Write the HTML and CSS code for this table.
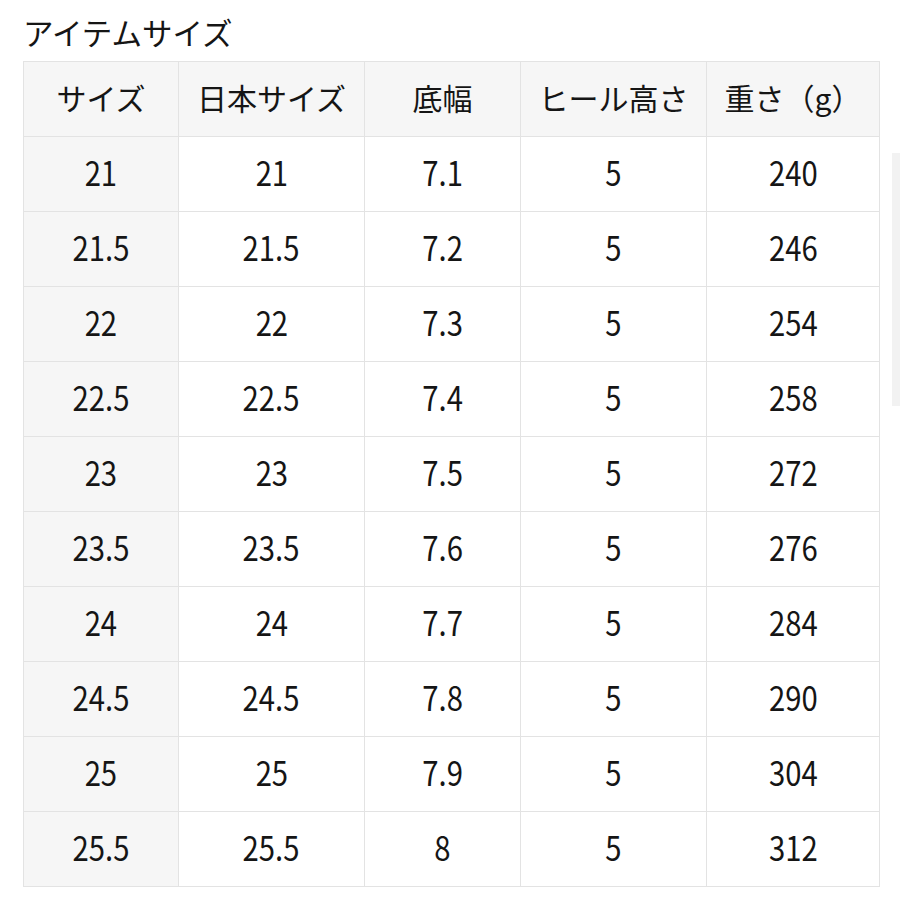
FILE: index.html
```html
<!DOCTYPE html>
<html lang="ja">
<head>
<meta charset="utf-8">
<link rel="stylesheet" href="styles.css">
</head>
<body>
<div class="page">
  <h2 class="title">アイテムサイズ</h2>
  <table class="sizes">
    <colgroup>
      <col class="c1"><col class="c2"><col class="c3"><col class="c4"><col class="c5">
    </colgroup>
    <thead>
      <tr><th>サイズ</th><th>日本サイズ</th><th>底幅</th><th>ヒール高さ</th><th>重さ（g）</th></tr>
    </thead>
    <tbody>
      <tr><th><span class="num">21</span></th><td><span class="num">21</span></td><td><span class="num">7.1</span></td><td><span class="num">5</span></td><td><span class="num">240</span></td></tr>
      <tr><th><span class="num">21.5</span></th><td><span class="num">21.5</span></td><td><span class="num">7.2</span></td><td><span class="num">5</span></td><td><span class="num">246</span></td></tr>
      <tr><th><span class="num">22</span></th><td><span class="num">22</span></td><td><span class="num">7.3</span></td><td><span class="num">5</span></td><td><span class="num">254</span></td></tr>
      <tr><th><span class="num">22.5</span></th><td><span class="num">22.5</span></td><td><span class="num">7.4</span></td><td><span class="num">5</span></td><td><span class="num">258</span></td></tr>
      <tr><th><span class="num">23</span></th><td><span class="num">23</span></td><td><span class="num">7.5</span></td><td><span class="num">5</span></td><td><span class="num">272</span></td></tr>
      <tr><th><span class="num">23.5</span></th><td><span class="num">23.5</span></td><td><span class="num">7.6</span></td><td><span class="num">5</span></td><td><span class="num">276</span></td></tr>
      <tr><th><span class="num">24</span></th><td><span class="num">24</span></td><td><span class="num">7.7</span></td><td><span class="num">5</span></td><td><span class="num">284</span></td></tr>
      <tr><th><span class="num">24.5</span></th><td><span class="num">24.5</span></td><td><span class="num">7.8</span></td><td><span class="num">5</span></td><td><span class="num">290</span></td></tr>
      <tr><th><span class="num">25</span></th><td><span class="num">25</span></td><td><span class="num">7.9</span></td><td><span class="num">5</span></td><td><span class="num">304</span></td></tr>
      <tr><th><span class="num">25.5</span></th><td><span class="num">25.5</span></td><td><span class="num">8</span></td><td><span class="num">5</span></td><td><span class="num">312</span></td></tr>
    </tbody>
  </table>
  <div class="scrollbar"></div>
</div>
</body>
</html>
```
FILE: styles.css
```css
html, body {
  margin: 0;
  padding: 0;
  background: #ffffff;
}
body {
  font-family: "Noto Sans CJK JP", "Noto Sans", sans-serif;
  color: #151515;
}
.page {
  position: relative;
  width: 900px;
  height: 900px;
  padding: 12px 0 0 23px;
  box-sizing: border-box;
}
.title {
  margin: 0;
  font-size: 30.5px;
  font-weight: 400;
  line-height: 40px;
  height: 49px;
}
.sizes {
  border-collapse: collapse;
  table-layout: fixed;
  width: 856px;
}
.c1 { width: 155px; }
.c2 { width: 186px; }
.c3 { width: 156px; }
.c4 { width: 186px; }
.c5 { width: 173px; }
.sizes th, .sizes td {
  border: 1.5px solid #e3e3e3;
  height: 75px;
  box-sizing: border-box;
  padding: 0 0 5px 0;
  text-align: center;
  vertical-align: middle;
  font-weight: 400;
  font-size: 30px;
  line-height: 1;
}
.sizes thead th {
  background: #f6f6f6;
}
.sizes tbody th {
  background: #f6f6f6;
}
.num {
  display: inline-block;
  font-size: 34px;
  transform: scaleX(0.86);
}
.scrollbar {
  position: absolute;
  right: 0;
  top: 153px;
  width: 8px;
  height: 253px;
  background: #f2f2f2;
}
```
